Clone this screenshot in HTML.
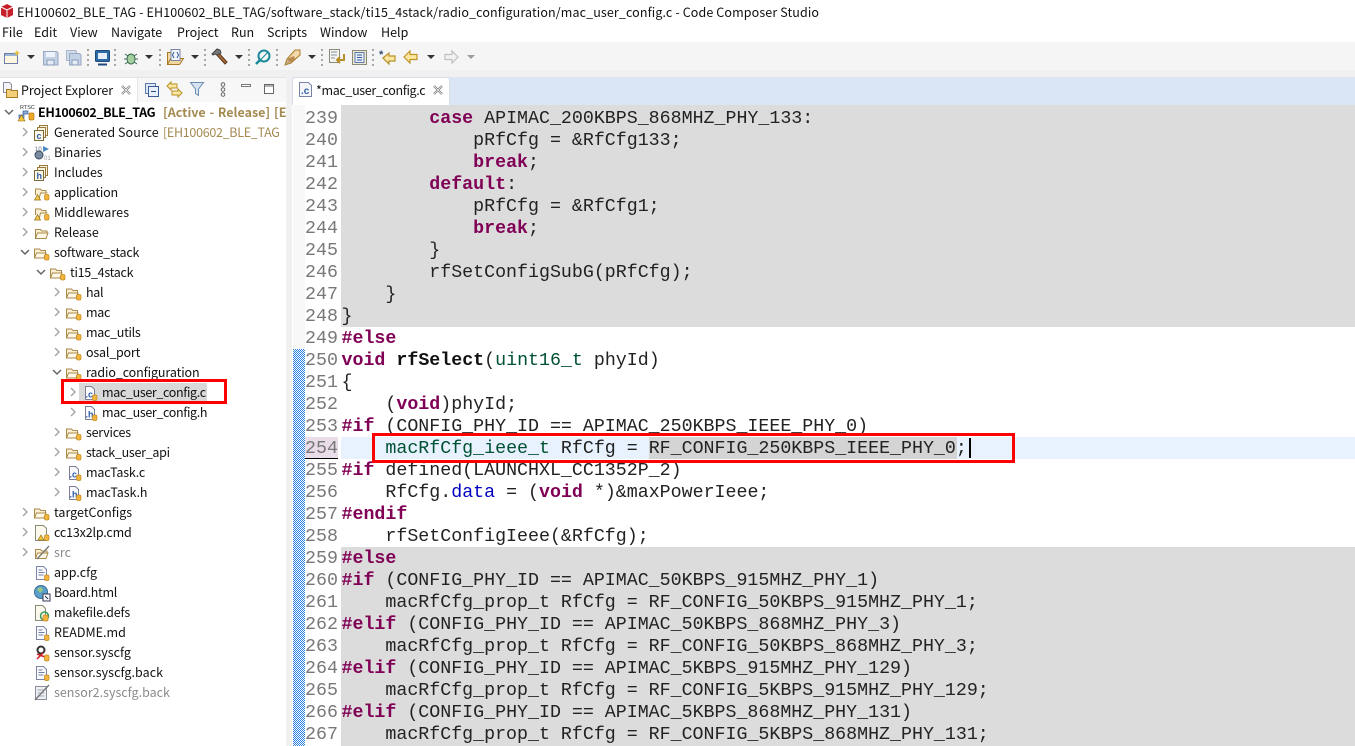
<!DOCTYPE html>
<html><head><meta charset="utf-8">
<style>
html,body{margin:0;padding:0;width:1355px;height:746px;overflow:hidden;background:#fff}
body{position:relative;font-family:"Noto Sans CJK SC","Liberation Sans",sans-serif;font-size:12.5px;color:#111}
.a{position:absolute}
.t{position:absolute;white-space:pre;line-height:20px;height:20px}
.g{color:#8a8a8a}.o{color:#a58a52}
.c{position:absolute;left:341.500px;height:22px;line-height:26px;white-space:pre;font-family:"Liberation Mono",monospace;font-size:18.300px;color:#222}
.n{position:absolute;left:305px;height:22px;line-height:26px;white-space:pre;font-family:"Liberation Mono",monospace;font-size:18.300px;color:#787878}
.k{color:#7f0055;font-weight:bold}.b{font-weight:bold;color:#111}.y{color:#005032}.f{color:#0000c0}
svg{position:absolute;overflow:visible}
.m{position:absolute;top:22px;line-height:20px;font-size:12.5px;color:#111}
</style></head><body>
<svg width="0" height="0" style="position:absolute"><defs>
<pattern id="hatch" x="0" y="0" width="2" height="2" patternUnits="userSpaceOnUse"><rect width="2" height="2" fill="#fff"/><rect width="1" height="1" fill="#2a80e0" shape-rendering="crispEdges"/><rect x="1" y="1" width="1" height="1" fill="#2a80e0" shape-rendering="crispEdges"/></pattern>
<symbol id="fo" viewBox="0 0 16 16"><path d="M1.500 13.500V4.500h5l1.500 1.500h5v2" fill="#fbf0d4" stroke="#a98a4a"/><path d="M1.500 13.500l2-5.500h10.500l-2 5.500z" fill="#fef8e8" stroke="#a98a4a"/></symbol>
<symbol id="fd" viewBox="0 0 16 16"><path d="M0.500 13V4h5l1.500 1.500h4.500v2" fill="#fbf0d4" stroke="#a98a4a"/><path d="M0.500 13l2-5h9.500l-2 5z" fill="#fef8e8" stroke="#a98a4a"/><rect x="10.500" y="9.500" width="4.500" height="5.500" rx="1.500" fill="#f4b43c" stroke="#c08a20" stroke-width=".7"/></symbol>
<symbol id="fw" viewBox="0 0 16 16"><path d="M1.500 10V4h5l1.500 1.500h4v2" fill="#fbf0d4" stroke="#a98a4a"/><path d="M5 14l1.500-6h7" fill="#fef8e8" stroke="#a98a4a"/><path d="M.5 15l3-5.500 3 5.500z" fill="#f7cb50" stroke="#8a6a10" stroke-width=".7"/><rect x="10.500" y="9.500" width="4.500" height="5.500" rx="1.500" fill="#f4b43c" stroke="#c08a20" stroke-width=".7"/></symbol>
<symbol id="fc" viewBox="0 0 16 16"><path d="M3.500 1.500h6l3 3v10h-9z" fill="#fbfbfd" stroke="#7a7f96"/><text x="3.500" y="12.500" font-family="Liberation Sans" font-size="9" font-weight="bold" fill="#2d5fa8">.c</text><rect x="10.500" y="10" width="4.500" height="5.500" rx="1.500" fill="#f4b43c" stroke="#c08a20" stroke-width=".7"/></symbol>
<symbol id="fh" viewBox="0 0 16 16"><path d="M3.500 1.500h6l3 3v10h-9z" fill="#fbfbfd" stroke="#7a7f96"/><text x="3.500" y="12.500" font-family="Liberation Sans" font-size="9" font-weight="bold" fill="#2d5fa8">.h</text><rect x="10.500" y="10" width="4.500" height="5.500" rx="1.500" fill="#f4b43c" stroke="#c08a20" stroke-width=".7"/></symbol>
<symbol id="fl" viewBox="0 0 16 16"><path d="M2.500 1.500h7l3 3v10h-10z" fill="#fbfbfd" stroke="#7a84a6"/><path d="M4.500 5h4M4.500 7.500h6M4.500 10h5" stroke="#6d7fa8"/><rect x="10.500" y="10" width="4.500" height="5.500" rx="1.500" fill="#f4b43c" stroke="#c08a20" stroke-width=".7"/></symbol>
<symbol id="ar" viewBox="0 0 10 10"><path d="M3 1l4 4-4 4" fill="none" stroke="#a8a8a8" stroke-width="1.500"/></symbol>
<symbol id="ad" viewBox="0 0 10 10"><path d="M1 3l4 4 4-4" fill="none" stroke="#666" stroke-width="1.500"/></symbol>
<symbol id="dd" viewBox="0 0 8 4"><path d="M0 0h8l-4 4z" fill="#333"/></symbol>
<symbol id="sep" viewBox="0 0 2 20"><path d="M1 1v2M1 6v2M1 11v2M1 16v2" stroke="#a8a8a0" stroke-width="2"/></symbol>
</defs></svg>

<!-- title -->
<svg style="left:0;top:4px" width="14" height="14" viewBox="0 0 14 14"><path d="M1 3l6-3 6 3v8l-6 3-6-3z" fill="#c8202a"/><path d="M1 3l6 3 6-3M7 6v8" stroke="#fff" stroke-width="1" fill="none"/></svg>
<div class="a" style="left:17px;top:2px;line-height:20px;white-space:pre;color:#111;font-size:12.5px;letter-spacing:.115px">EH100602_BLE_TAG - EH100602_BLE_TAG/software_stack/ti15_4stack/radio_configuration/mac_user_config.c - Code Composer Studio</div>
<!-- menu -->
<div class="m" style="left:2px">File</div><div class="m" style="left:34px">Edit</div><div class="m" style="left:70px">View</div><div class="m" style="left:111px">Navigate</div><div class="m" style="left:177px">Project</div><div class="m" style="left:231px">Run</div><div class="m" style="left:267px">Scripts</div><div class="m" style="left:320px">Window</div><div class="m" style="left:381px">Help</div>
<!-- toolbar -->
<div class="a" style="left:0;top:42px;width:1355px;height:28px;background:#f5f5f5"></div>
<div class="a" style="left:0;top:70px;width:1355px;height:7px;background:#f0f0f0"></div>
<svg style="left:4px;top:50px" width="16" height="15"><rect x=".5" y="3.500" width="13" height="10" fill="#fdf6e0" stroke="#6d7fa8"/><rect x="1" y="4" width="12" height="2" fill="#9ab4d8"/><path d="M13 0l1 2 2 1-2 1-1 2-1-2-2-1 2-1z" fill="#e8c040"/></svg>
<svg style="left:27px;top:55px" width="8" height="4"><use href="#dd"/></svg>
<svg style="left:43px;top:50px" width="16" height="16"><path d="M.5 1.500h13l1.500 1.500v12H.5z" fill="#c4d2e6" stroke="#9aa8c4"/><rect x="3" y="2" width="9" height="5" fill="#eef2fa"/><rect x="4" y="10" width="7" height="5" fill="#e6ecf6" stroke="#8a9ab8"/></svg>
<svg style="left:66px;top:49px" width="16" height="17"><path d="M.5 1.500h9l1 1v9H.5z" fill="#d2dcea" stroke="#a8b4ca"/><path d="M3.500 4.500h10l1.500 1.500v10h-11.500z" fill="#c4d2e6" stroke="#9aa8c4"/><rect x="6" y="11" width="6" height="5" fill="#e6ecf6" stroke="#8a9ab8"/></svg>
<svg style="left:87px;top:48px" width="2" height="20"><use href="#sep"/></svg>
<svg style="left:95px;top:50px" width="16" height="16"><rect x=".5" y=".5" width="14" height="11" rx="1" fill="#2c6aa8" stroke="#1e4a80"/><rect x="3" y="3" width="9" height="6" fill="#e6eefa"/><path d="M3 14.500h9" stroke="#1e4a80" stroke-width="2"/></svg>
<svg style="left:114px;top:48px" width="2" height="20"><use href="#sep"/></svg>
<svg style="left:123px;top:50px" width="16" height="16"><ellipse cx="8" cy="9" rx="4" ry="5" fill="#a4d0a0" stroke="#3a6a50"/><path d="M2 4l3 2M14 4l-3 2M1 9h3M12 9h3M2 14l3-2M14 14l-3-2" stroke="#3a6a50"/></svg>
<svg style="left:145px;top:55px" width="8" height="4"><use href="#dd"/></svg>
<svg style="left:159px;top:48px" width="2" height="20"><use href="#sep"/></svg>
<svg style="left:167px;top:49px" width="17" height="17"><path d="M.5 15.500v-12h4M.5 15.500h12l4-6h-13z" fill="#f3d9a0" stroke="#a87a28"/><rect x="4" y=".5" width="9" height="11" fill="#f4f6fa" stroke="#7a84a6"/><path d="M7 3l-1.500 3 1.500 3M10 3l1.500 3-1.500 3" stroke="#2c5aa0" fill="none"/></svg>
<svg style="left:191px;top:55px" width="8" height="4"><use href="#dd"/></svg>
<svg style="left:204px;top:48px" width="2" height="20"><use href="#sep"/></svg>
<svg style="left:211px;top:48px" width="17" height="17"><path d="M4 5l10 11 2-2L6 3z" fill="#a86a38" stroke="#5a3a20"/><path d="M1 6l5-5 3 1 1 3-4 2-2-1-2 1z" fill="#777" stroke="#444"/></svg>
<svg style="left:235px;top:55px" width="8" height="4"><use href="#dd"/></svg>
<svg style="left:248px;top:48px" width="2" height="20"><use href="#sep"/></svg>
<svg style="left:255px;top:49px" width="16" height="17"><circle cx="9" cy="7" r="5.500" fill="none" stroke="#1a8a9a" stroke-width="2"/><path d="M5 11l-4 4" stroke="#1a8a9a" stroke-width="2.500"/><path d="M5.500 11L13 3" stroke="#1a8a9a"/></svg>
<svg style="left:276px;top:48px" width="2" height="20"><use href="#sep"/></svg>
<svg style="left:284px;top:49px" width="17" height="17"><path d="M1 16l2-6 8-9h5v5l-9 8z" fill="#f2d8a8" stroke="#a87a28"/><path d="M3 10l4 4 4-4-1-3z" fill="#b88a50"/><path d="M1 16l3-5 2 2z" fill="#b0a080"/></svg>
<svg style="left:308px;top:55px" width="8" height="4"><use href="#dd"/></svg>
<svg style="left:321px;top:48px" width="2" height="20"><use href="#sep"/></svg>
<svg style="left:329px;top:49px" width="16" height="16"><rect x=".5" y=".5" width="10" height="13" fill="#f4f4f0" stroke="#8a8a78"/><path d="M2 3h6M2 6h6M2 9h4" stroke="#8a94a8"/><path d="M15 5v6H9M11 8l-3 3 3 3" fill="none" stroke="#b8902a" stroke-width="2"/></svg>
<svg style="left:352px;top:50px" width="15" height="15"><rect x=".5" y=".5" width="14" height="14" fill="#f0e8d0" stroke="#8a8a78"/><rect x="3" y="2.500" width="9" height="10" fill="#e8eef8" stroke="#5a7ab0"/><path d="M5 5h5M5 7.500h5M5 10h5" stroke="#3a5a98"/></svg>
<svg style="left:372px;top:48px" width="2" height="20"><use href="#sep"/></svg>
<svg style="left:379px;top:49px" width="17" height="17"><path d="M4 9l6-5v3h6v5h-6v3z" fill="#fbe7a0" stroke="#b8902a" stroke-width="1.200"/><text x="0" y="9" font-family="Liberation Sans" font-size="11" font-weight="bold" fill="#334a70">*</text></svg>
<svg style="left:403px;top:50px" width="15" height="14"><path d="M1 7l6-6v3.500h7v5H7V13z" fill="#fbe7a0" stroke="#c09428" stroke-width="1.200"/></svg>
<svg style="left:427px;top:55px" width="8" height="4"><use href="#dd"/></svg>
<svg style="left:444px;top:50px" width="15" height="14"><path d="M14 7L8 1v3.500H1v5h7V13z" fill="#f2f2f2" stroke="#c0c0c0" stroke-width="1.200"/></svg>
<svg style="left:467px;top:55px" width="8" height="4" opacity=".45"><use href="#dd"/></svg>

<!-- panel frame -->
<div class="a" style="left:0;top:77px;width:287px;height:25px;background:#f7f7f7;border-top:1px solid #e4e4e4;box-sizing:border-box"></div>
<div class="a" style="left:0;top:77px;width:138px;height:26px;background:#fff;border:1px solid #e4e4e4;border-left:0;border-bottom:0;box-sizing:border-box"></div>
<div class="a" style="left:286px;top:102px;width:6px;height:644px;background:#f0f0f0"></div>
<div class="a" style="left:286px;top:77px;width:6px;height:25px;background:#f0f0f0"></div>
<svg style="left:2px;top:82px" width="17" height="17"><path d="M1.500 .5h6l2 2v8h-8z" fill="#f4f4f8" stroke="#8a8fa0"/><path d="M4.500 15.500v-8h4l1 1h6v7z" fill="#f3cf78" stroke="#a87a28"/></svg>
<div class="a" style="left:21px;top:80px;line-height:20px;font-size:12.5px;white-space:pre;letter-spacing:-.05px">Project Explorer</div>
<svg style="left:121px;top:85px" width="10" height="10"><path d="M1 1l8 8M9 1l-8 8" stroke="#777" stroke-width="2.200"/><path d="M1 1l8 8M9 1l-8 8" stroke="#f4f4f4" stroke-width=".8"/></svg>
<svg style="left:145px;top:83px" width="14" height="14"><rect x=".5" y=".5" width="10" height="10" fill="#dfe8f4" stroke="#5a7ab0"/><rect x="3.500" y="3.500" width="10" height="10" fill="#e8f0fa" stroke="#3a5a98"/><path d="M6 8.500h5" stroke="#2c4a88"/></svg>
<svg style="left:166px;top:81px" width="17" height="17"><path d="M1 5l4-4v2h6v4H5v2zM16 12l-4-4v2H6v4h6v2z" fill="#fbe7a0" stroke="#b8902a"/></svg>
<svg style="left:190px;top:82px" width="14" height="14"><path d="M.5 .5h13L8.500 7v6.500l-3-2V7z" fill="#d8e4f2" stroke="#6a8ab0"/></svg>
<svg style="left:220px;top:82px" width="6" height="15"><circle cx="3" cy="2.500" r="1.800" fill="none" stroke="#666"/><circle cx="3" cy="7.500" r="1.800" fill="none" stroke="#666"/><circle cx="3" cy="12.500" r="1.800" fill="none" stroke="#666"/></svg>
<svg style="left:241px;top:84px" width="10" height="4"><rect x=".5" y=".5" width="9" height="2" fill="#fff" stroke="#777"/></svg>
<svg style="left:264px;top:84px" width="10" height="10"><rect x=".5" y=".5" width="9" height="9" fill="#fff" stroke="#666"/><path d="M0 2h10" stroke="#666"/></svg>

<!-- tree -->
<svg style="left:4px;top:107px" width="10" height="10"><use href="#ad"/></svg>
<svg style="left:17px;top:104px" width="18" height="17"><text x="3" y="5" font-family="Liberation Sans" font-size="5.500" fill="#333">RTSC</text><path d="M6 7h5v3H6zM2 11h5v3H2z" fill="#8ab0d8" stroke="#3a5a98" stroke-width=".7"/><path d="M1 17l3.500-6 3.500 6z" fill="#f5c43a" stroke="#8a6a10" stroke-width=".6"/><rect x="12" y="9" width="5" height="7" rx="1.500" fill="#f0a828" stroke="#b87a10" stroke-width=".7"/></svg>
<div class="t" style="left:38px;top:102px;font-weight:bold;color:#000;letter-spacing:-.37px">EH100602_BLE_TAG</div>
<div class="a" style="left:163px;top:102px;width:123px;overflow:hidden;white-space:pre;line-height:20px;font-weight:bold;color:#a58a52;word-spacing:1px">[Active - Release] [EH100602</div>

<div id="tree">
<svg style="left:20px;top:127px" width="10" height="10"><use href="#ar"/></svg><svg style="left:34px;top:125px" width="16" height="16"><path d="M5.500 .5h8v10h-8z" fill="#f8f2e0" stroke="#9a7a3a"/><path d="M3.500 2.500h8v10h-8z" fill="#f8f2e0" stroke="#9a7a3a"/><path d="M.5 5.500h9v10h-9z" fill="#fbf6e6" stroke="#7a6a3a"/><text x="2.500" y="14" font-size="9" font-weight="bold" font-family="Liberation Sans" fill="#2d5fa8">c</text></svg><div class="t" style="left:54px;top:122px;letter-spacing:.06px">Generated Source</div><div class="a o" style="left:163px;top:122px;line-height:20px;white-space:pre;width:117px;overflow:hidden;letter-spacing:-.3px">[EH100602_BLE_TAG</div>
<svg style="left:20px;top:147px" width="10" height="10"><use href="#ar"/></svg><svg style="left:33px;top:145px" width="17" height="16"><circle cx="6" cy="10" r="4" fill="#7a8aa0" stroke="#3a4a60"/><path d="M10 1l6 3-6 3z" fill="#4a8ac0"/><text x="2" y="6" font-size="6" font-family="Liberation Sans" fill="#667">10</text><text x="11" y="15" font-size="6" font-family="Liberation Sans" fill="#99a">01</text></svg><div class="t" style="left:54px;top:142px">Binaries</div>
<svg style="left:20px;top:167px" width="10" height="10"><use href="#ar"/></svg><svg style="left:34px;top:165px" width="16" height="16"><path d="M5.500 .5h8v10h-8z" fill="#f8f2e0" stroke="#9a7a3a"/><path d="M3.500 2.500h8v10h-8z" fill="#f8f2e0" stroke="#9a7a3a"/><path d="M.5 5.500h9v10h-9z" fill="#fbf6e6" stroke="#7a6a3a"/><text x="2.500" y="14" font-size="9" font-weight="bold" font-family="Liberation Sans" fill="#2d5fa8">h</text></svg><div class="t" style="left:54px;top:162px;letter-spacing:-.1px">Includes</div>
<svg style="left:20px;top:187px" width="10" height="10"><use href="#ar"/></svg><svg style="left:34px;top:185px" width="16" height="16"><use href="#fw"/></svg><div class="t" style="left:54px;top:182px;letter-spacing:-.18px">application</div>
<svg style="left:20px;top:207px" width="10" height="10"><use href="#ar"/></svg><svg style="left:34px;top:205px" width="16" height="16"><use href="#fw"/></svg><div class="t" style="left:54px;top:202px;letter-spacing:.1px">Middlewares</div>
<svg style="left:20px;top:227px" width="10" height="10"><use href="#ar"/></svg><svg style="left:34px;top:225px" width="16" height="16"><use href="#fo"/></svg><div class="t" style="left:54px;top:222px">Release</div>
<svg style="left:20px;top:247px" width="10" height="10"><use href="#ad"/></svg><svg style="left:34px;top:245px" width="16" height="16"><use href="#fd"/></svg><div class="t" style="left:54px;top:242px;letter-spacing:-.2px">software_stack</div>
<svg style="left:36px;top:267px" width="10" height="10"><use href="#ad"/></svg><svg style="left:50px;top:265px" width="16" height="16"><use href="#fd"/></svg><div class="t" style="left:70px;top:262px;letter-spacing:-.27px">ti15_4stack</div>
<svg style="left:52px;top:287px" width="10" height="10"><use href="#ar"/></svg><svg style="left:66px;top:285px" width="16" height="16"><use href="#fd"/></svg><div class="t" style="left:86px;top:282px;letter-spacing:-.3px">hal</div>
<svg style="left:52px;top:307px" width="10" height="10"><use href="#ar"/></svg><svg style="left:66px;top:305px" width="16" height="16"><use href="#fd"/></svg><div class="t" style="left:86px;top:302px;letter-spacing:-.3px">mac</div>
<svg style="left:52px;top:327px" width="10" height="10"><use href="#ar"/></svg><svg style="left:66px;top:325px" width="16" height="16"><use href="#fd"/></svg><div class="t" style="left:86px;top:322px;letter-spacing:-.3px">mac_utils</div>
<svg style="left:52px;top:347px" width="10" height="10"><use href="#ar"/></svg><svg style="left:66px;top:345px" width="16" height="16"><use href="#fd"/></svg><div class="t" style="left:86px;top:342px;letter-spacing:-.2px">osal_port</div>
<svg style="left:52px;top:367px" width="10" height="10"><use href="#ad"/></svg><svg style="left:66px;top:365px" width="16" height="16"><use href="#fd"/></svg><div class="t" style="left:86px;top:362px;letter-spacing:-.1px">radio_configuration</div>
<div class="a" style="left:79px;top:383px;width:128px;height:20px;background:#d9d9d9"></div>
<svg style="left:68px;top:387px" width="10" height="10"><use href="#ar"/></svg><svg style="left:82px;top:385px" width="16" height="16"><use href="#fc"/></svg><div class="t" style="left:102px;top:382px;letter-spacing:-.35px">mac_user_config.c</div>
<svg style="left:68px;top:407px" width="10" height="10"><use href="#ar"/></svg><svg style="left:82px;top:405px" width="16" height="16"><use href="#fh"/></svg><div class="t" style="left:102px;top:402px;letter-spacing:-.35px">mac_user_config.h</div>
<svg style="left:52px;top:427px" width="10" height="10"><use href="#ar"/></svg><svg style="left:66px;top:425px" width="16" height="16"><use href="#fd"/></svg><div class="t" style="left:86px;top:422px;letter-spacing:-.25px">services</div>
<svg style="left:52px;top:447px" width="10" height="10"><use href="#ar"/></svg><svg style="left:66px;top:445px" width="16" height="16"><use href="#fd"/></svg><div class="t" style="left:86px;top:442px;letter-spacing:-.28px">stack_user_api</div>
<svg style="left:52px;top:467px" width="10" height="10"><use href="#ar"/></svg><svg style="left:66px;top:465px" width="16" height="16"><use href="#fc"/></svg><div class="t" style="left:86px;top:462px;letter-spacing:-.2px">macTask.c</div>
<svg style="left:52px;top:487px" width="10" height="10"><use href="#ar"/></svg><svg style="left:66px;top:485px" width="16" height="16"><use href="#fh"/></svg><div class="t" style="left:86px;top:482px;letter-spacing:-.1px">macTask.h</div>
<svg style="left:20px;top:507px" width="10" height="10"><use href="#ar"/></svg><svg style="left:34px;top:505px" width="16" height="16"><use href="#fd"/></svg><div class="t" style="left:54px;top:502px">targetConfigs</div>
<svg style="left:20px;top:527px" width="10" height="10"><use href="#ar"/></svg><svg style="left:34px;top:525px" width="16" height="16"><path d="M1.500 .5h8l3 3v12h-11z" fill="#fbf8ee" stroke="#8a8a78"/><path d="M4 15l3-5 3 5z" fill="#f5c43a" stroke="#8a6a10" stroke-width=".6"/><rect x="10.500" y="10" width="4.500" height="5.500" rx="1.500" fill="#f4b43c" stroke="#c08a20" stroke-width=".7"/></svg><div class="t" style="left:54px;top:522px;letter-spacing:-.17px">cc13x2lp.cmd</div>
<svg style="left:20px;top:547px" width="10" height="10"><use href="#ar"/></svg><svg style="left:34px;top:545px" width="16" height="16"><use href="#fo"/><path d="M3 14L15 1" stroke="#777" stroke-width="1.300"/></svg><div class="t g" style="left:54px;top:542px">src</div>
<svg style="left:34px;top:565px" width="16" height="16"><use href="#fl"/></svg><div class="t" style="left:54px;top:562px">app.cfg</div>
<svg style="left:34px;top:585px" width="16" height="16"><circle cx="7" cy="7" r="6.500" fill="#5aa0c8" stroke="#3a6a98"/><path d="M3 4l4-2 2 3-3 3zM8 9l3-1 1 2-3 2z" fill="#9ac880"/><rect x="9" y="9" width="7" height="7" fill="#fff" stroke="#335"/><path d="M11 11l3 3" stroke="#224"/></svg><div class="t" style="left:54px;top:582px;letter-spacing:-.3px">Board.html</div>
<svg style="left:34px;top:605px" width="16" height="16"><path d="M1.500 .5h7l3 3v12h-10z" fill="#fbf8ee" stroke="#8a8a78"/><circle cx="10.500" cy="11" r="4" fill="none" stroke="#3a9a5a" stroke-width="1.500"/><rect x="9" y="10" width="5" height="6" rx="1.500" fill="#f4b43c" stroke="#c08a20" stroke-width=".7"/></svg><div class="t" style="left:54px;top:602px;letter-spacing:-.15px">makefile.defs</div>
<svg style="left:34px;top:625px" width="16" height="16"><use href="#fl"/></svg><div class="t" style="left:54px;top:622px">README.md</div>
<svg style="left:34px;top:645px" width="16" height="16"><circle cx="7" cy="5" r="3.500" fill="none" stroke="#333" stroke-width="2"/><path d="M3 9l8 3M9 8l-6 6" stroke="#d02020" stroke-width="1.500"/><rect x="10.500" y="10" width="4.500" height="6" rx="1.500" fill="#f4b43c" stroke="#c08a20" stroke-width=".7"/></svg><div class="t" style="left:54px;top:642px">sensor.syscfg</div>
<svg style="left:34px;top:665px" width="16" height="16"><use href="#fl"/></svg><div class="t" style="left:54px;top:662px;letter-spacing:.05px">sensor.syscfg.back</div>
<svg style="left:34px;top:685px" width="16" height="16"><path d="M1.500 1.500h11v13h-11z" fill="#eef0f4" stroke="#8a8fa0"/><path d="M3.500 5h7M3.500 8h7M3.500 11h7" stroke="#a0a8b8"/><path d="M1 15L15 0" stroke="#777" stroke-width="1.300"/></svg><div class="t g" style="left:54px;top:682px">sensor2.syscfg.back</div>
</div>
<div class="a" style="left:61px;top:379px;width:166px;height:25px;border:3px solid #f00;box-sizing:border-box"></div>

<!-- editor tabs -->
<div class="a" style="left:292px;top:77px;width:1063px;height:28px;background:#dae5f6"></div>
<div class="a" style="left:292px;top:77px;width:158px;height:28px;background:#fff;border:1px solid #d8dde6;border-bottom:0;box-sizing:border-box;border-radius:3px 3px 0 0"></div>
<svg style="left:299px;top:82px" width="14" height="16"><path d="M.5 .5h9l3 3v11h-12z" fill="#f4f6fa" stroke="#7a84a6"/><text x="2" y="12" font-family="Liberation Sans" font-size="10" font-weight="bold" fill="#2d5fa8">.c</text></svg>
<div class="a" style="left:316px;top:80px;line-height:20px;font-size:12.5px;white-space:pre;letter-spacing:-.35px">*mac_user_config.c</div>
<svg style="left:433px;top:85px" width="10" height="10"><path d="M1 1l8 8M9 1l-8 8" stroke="#777" stroke-width="2.200"/><path d="M1 1l8 8M9 1l-8 8" stroke="#f4f4f4" stroke-width=".8"/></svg>

<!-- editor body -->
<div class="a" style="left:292px;top:105px;width:46px;height:641px;background:#fff"></div>
<div class="a" style="left:293px;top:105px;width:12px;height:641px;background:#f8f8f8"></div>
<svg style="left:293px;top:349px;overflow:hidden" width="12" height="397"><rect width="12" height="397" fill="url(#hatch)" shape-rendering="crispEdges"/></svg>
<div class="a" style="left:341px;top:105px;width:1014px;height:222px;background:#dcdcdc"></div>
<div class="a" style="left:341px;top:547px;width:1014px;height:199px;background:#dcdcdc"></div>
<div class="a" style="left:341px;top:437px;width:1014px;height:22px;background:#e8f2fe"></div>
<div class="a" style="left:305px;top:437px;width:33px;height:21px;background:#e9dde9;border-bottom:1px solid #000"></div>
<div class="a" style="left:649px;top:437px;width:308px;height:22px;background:#d4d4d4"></div>
<div class="a" style="left:969px;top:438px;width:1.500px;height:20px;background:#000"></div>

<div class="n" style="top:106px">239</div><div class="c" style="top:106px">        <span class="k">case</span> APIMAC_200KBPS_868MHZ_PHY_133:</div>
<div class="n" style="top:128px">240</div><div class="c" style="top:128px">            pRfCfg = &amp;RfCfg133;</div>
<div class="n" style="top:150px">241</div><div class="c" style="top:150px">            <span class="k">break</span>;</div>
<div class="n" style="top:172px">242</div><div class="c" style="top:172px">        <span class="k">default</span>:</div>
<div class="n" style="top:194px">243</div><div class="c" style="top:194px">            pRfCfg = &amp;RfCfg1;</div>
<div class="n" style="top:216px">244</div><div class="c" style="top:216px">            <span class="k">break</span>;</div>
<div class="n" style="top:238px">245</div><div class="c" style="top:238px">        }</div>
<div class="n" style="top:260px">246</div><div class="c" style="top:260px">        rfSetConfigSubG(pRfCfg);</div>
<div class="n" style="top:282px">247</div><div class="c" style="top:282px">    }</div>
<div class="n" style="top:304px">248</div><div class="c" style="top:304px">}</div>
<div class="n" style="top:326px">249</div><div class="c" style="top:326px"><span class="k">#else</span></div>
<div class="n" style="top:348px">250</div><div class="c" style="top:348px"><span class="k">void</span> <span class="b">rfSelect</span>(<span class="y">uint16_t</span> phyId)</div>
<div class="n" style="top:370px">251</div><div class="c" style="top:370px">{</div>
<div class="n" style="top:392px">252</div><div class="c" style="top:392px">    (<span class="k">void</span>)phyId;</div>
<div class="n" style="top:414px">253</div><div class="c" style="top:414px"><span class="k">#if</span> (CONFIG_PHY_ID == APIMAC_250KBPS_IEEE_PHY_0)</div>
<div class="n" style="top:436px">254</div><div class="c" style="top:436px">    <span class="y">macRfCfg_ieee_t</span> RfCfg = RF_CONFIG_250KBPS_IEEE_PHY_0;</div>
<div class="n" style="top:458px">255</div><div class="c" style="top:458px"><span class="k">#if</span> defined(LAUNCHXL_CC1352P_2)</div>
<div class="n" style="top:480px">256</div><div class="c" style="top:480px">    RfCfg.<span class="f">data</span> = (<span class="k">void</span> *)&amp;maxPowerIeee;</div>
<div class="n" style="top:502px">257</div><div class="c" style="top:502px"><span class="k">#endif</span></div>
<div class="n" style="top:524px">258</div><div class="c" style="top:524px">    rfSetConfigIeee(&amp;RfCfg);</div>
<div class="n" style="top:546px">259</div><div class="c" style="top:546px"><span class="k">#else</span></div>
<div class="n" style="top:568px">260</div><div class="c" style="top:568px"><span class="k">#if</span> (CONFIG_PHY_ID == APIMAC_50KBPS_915MHZ_PHY_1)</div>
<div class="n" style="top:590px">261</div><div class="c" style="top:590px">    macRfCfg_prop_t RfCfg = RF_CONFIG_50KBPS_915MHZ_PHY_1;</div>
<div class="n" style="top:612px">262</div><div class="c" style="top:612px"><span class="k">#elif</span> (CONFIG_PHY_ID == APIMAC_50KBPS_868MHZ_PHY_3)</div>
<div class="n" style="top:634px">263</div><div class="c" style="top:634px">    macRfCfg_prop_t RfCfg = RF_CONFIG_50KBPS_868MHZ_PHY_3;</div>
<div class="n" style="top:656px">264</div><div class="c" style="top:656px"><span class="k">#elif</span> (CONFIG_PHY_ID == APIMAC_5KBPS_915MHZ_PHY_129)</div>
<div class="n" style="top:678px">265</div><div class="c" style="top:678px">    macRfCfg_prop_t RfCfg = RF_CONFIG_5KBPS_915MHZ_PHY_129;</div>
<div class="n" style="top:700px">266</div><div class="c" style="top:700px"><span class="k">#elif</span> (CONFIG_PHY_ID == APIMAC_5KBPS_868MHZ_PHY_131)</div>
<div class="n" style="top:722px">267</div><div class="c" style="top:722px">    macRfCfg_prop_t RfCfg = RF_CONFIG_5KBPS_868MHZ_PHY_131;</div>

<div class="a" style="left:372px;top:433px;width:643px;height:30px;border:3px solid #f00;box-sizing:border-box"></div>
</body></html>
